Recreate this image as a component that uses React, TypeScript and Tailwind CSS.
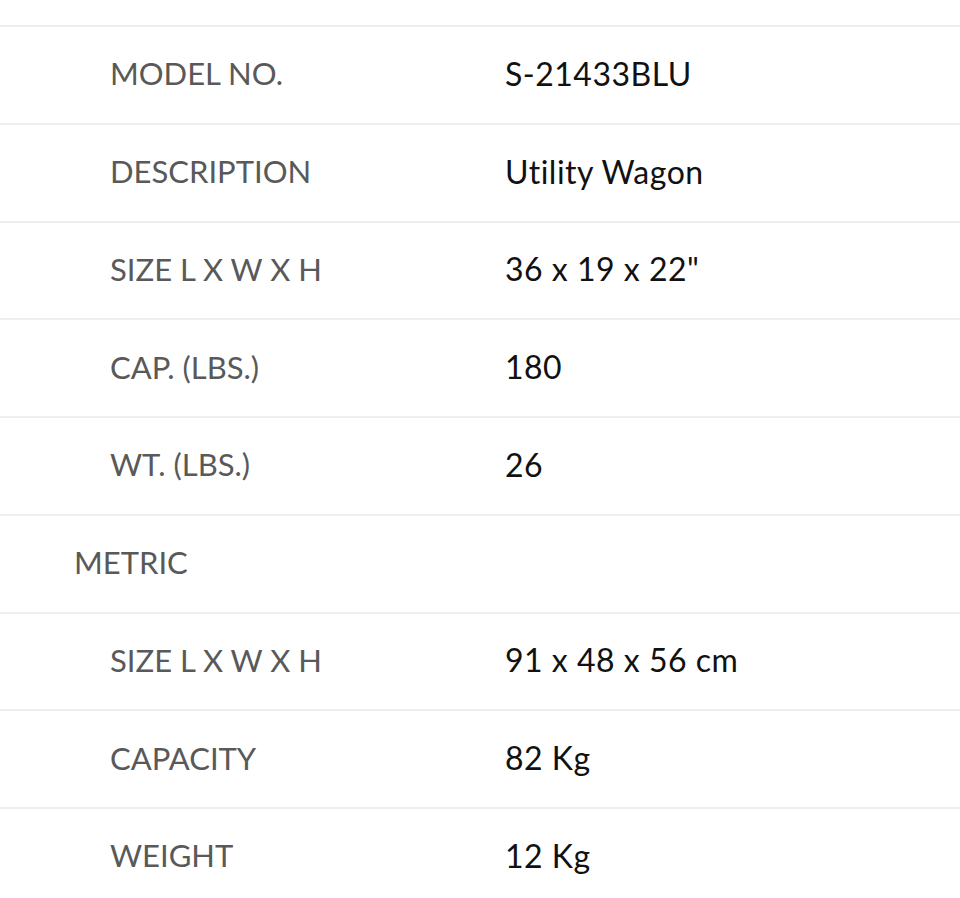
import React from "react";

const rows: { label: string; value?: string; header?: boolean }[] = [
  { label: "MODEL NO.", value: "S-21433BLU" },
  { label: "DESCRIPTION", value: "Utility Wagon" },
  { label: "SIZE L X W X H", value: "36 x 19 x 22\"" },
  { label: "CAP. (LBS.)", value: "180" },
  { label: "WT. (LBS.)", value: "26" },
  { label: "METRIC", header: true },
  { label: "SIZE L X W X H", value: "91 x 48 x 56 cm" },
  { label: "CAPACITY", value: "82 Kg" },
  { label: "WEIGHT", value: "12 Kg" },
];

export default function App() {
  return (
    <div
      className="w-[960px] h-[898px] overflow-hidden bg-white"
      style={{ fontFamily: "Lato, 'Noto Sans', sans-serif" }}
    >
      <div className="h-[25px]" />
      {rows.map((r, i) => (
        <div
          key={i}
          className="flex items-center h-[97.75px] border-t-2 border-[#eeeeee] leading-none pb-[2px]"
        >
          <div
            className={
              r.header
                ? "w-[505px] pl-[74px] text-[31px] text-[#595959]"
                : "w-[505px] pl-[110px] text-[31px] text-[#595959]"
            }
          >
            {r.label}
          </div>
          {r.value && (
            <div className="text-[32px] tracking-[0.5px] text-[#111111]">{r.value}</div>
          )}
        </div>
      ))}
    </div>
  );
}
